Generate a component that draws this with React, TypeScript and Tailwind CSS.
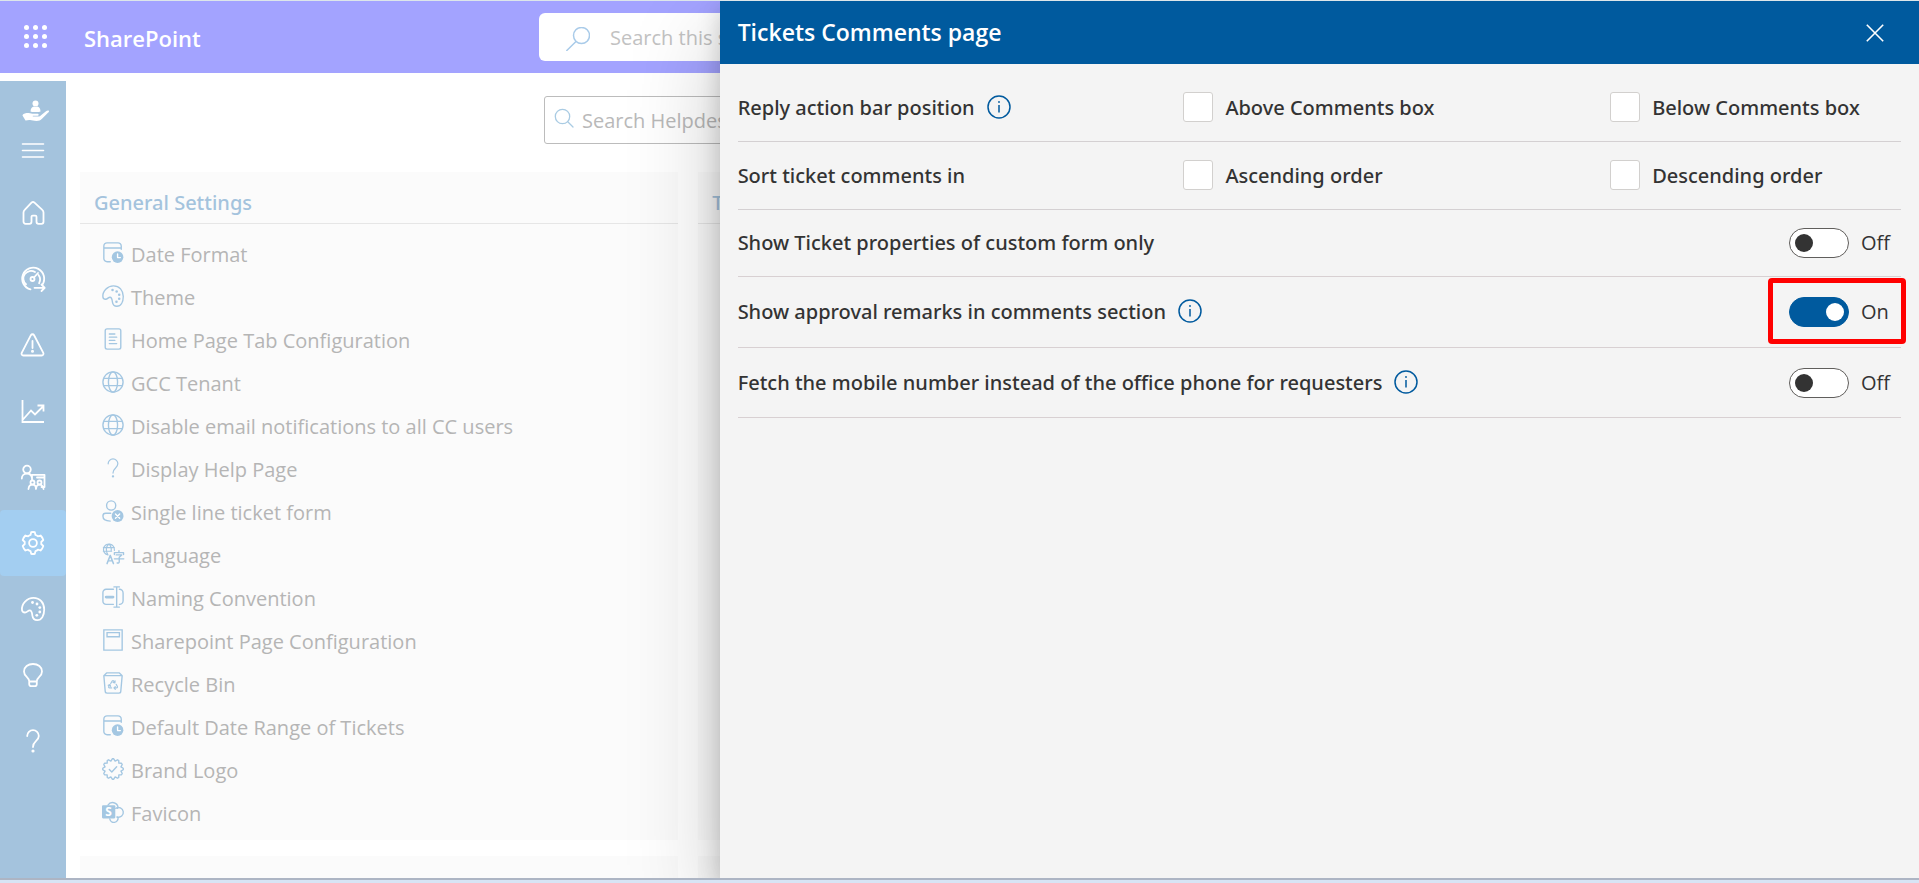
import React, { useState } from "react";

type IconProps = { className?: string };

function Svg({
  className = "size-6",
  sw = 1.5,
  children,
}: IconProps & { sw?: number; children: React.ReactNode }) {
  return (
    <svg
      viewBox="0 0 24 24"
      className={className}
      fill="none"
      stroke="currentColor"
      strokeWidth={sw}
      strokeLinecap="round"
      strokeLinejoin="round"
      overflow="visible"
      aria-hidden="true"
    >
      {children}
    </svg>
  );
}

const HandIcon = () => (
  <svg viewBox="0 0 28 24" className="h-6 w-7" fill="currentColor" aria-hidden="true">
    <circle cx="14.500" cy="4.500" r="3" />
    <path d="M9.500 12.500c0-3 1.500-4.500 3.500-5 1 .6 2.200.6 3.200 0 2 .5 3.300 2 3.300 5-1 .8-9 .8-10 0z" />
    <path d="M1.500 16.500c0-1 1.500-2.200 4-2.500 2.500-.2 4 .7 6 .7h5c1.600 0 1.500 2-.2 2.100h-4.500v.8h5.700c1 0 1.600-.6 2.200-1.200l5-4c1.200-1 3.800-1.400 3.300.2-.3 1-1.500 1.700-2.500 2.700l-4.500 4.400c-1.500 1.300-3 2.300-5.500 2.300-3 0-4.500-.5-6.500-.9-1.500-.3-3 .4-4.500.3z" />
  </svg>
);

const MenuIcon = () => (
  <Svg sw={1.6}>
    <path d="M1.500 5h21M1.500 11.500h21M1.500 18h21" />
  </Svg>
);

const HomeIcon = () => (
  <Svg sw={1.8}>
    <path d="M10.500 1.700a2.200 2.200 0 0 1 3 0l7.800 7.200c.8.700 1.200 1.700 1.200 2.700v9.200a2 2 0 0 1-2 2h-3a2 2 0 0 1-2-2v-5a1.200 1.200 0 0 0-1.200-1.200h-2.600a1.200 1.200 0 0 0-1.200 1.200v5a2 2 0 0 1-2 2h-4a2 2 0 0 1-2-2v-9.200c0-1 .4-2 1.200-2.700z" />
  </Svg>
);

const GaugeIcon = () => (
  <Svg sw={1.8}>
    <path d="M9.500 22.300A11 11 0 1 1 21.300 17.800" />
    <path d="M5 17.300a7.600 7.600 0 0 1 9-12.200M17.500 8a7.600 7.600 0 0 1 .6 8.200" />
    <circle cx="11.500" cy="12" r="2" />
    <path d="M13 10.500l4-4.500M13.500 20.800H23.500M20.500 17.500l3.200 3.300-3.200 3.200" />
  </Svg>
);

const WarningIcon = () => (
  <Svg sw={1.8}>
    <path d="M9.900 2.200c.7-1.300 2.500-1.300 3.200 0l9.200 17.600c.6 1.300-.2 2.700-1.600 2.700H2.300c-1.400 0-2.200-1.400-1.600-2.700z" />
    <path d="M11.500 8v7" />
    <circle cx="11.500" cy="18.200" r=".6" fill="currentColor" />
  </Svg>
);

const ChartIcon = () => (
  <Svg sw={1.8}>
    <path d="M1.500 1v22H23M2 20.500l8-9 4 4L22.500 7M16.500 6.500h6v6" strokeLinecap="butt" strokeLinejoin="miter" />
  </Svg>
);

const TeamIcon = () => (
  <Svg sw={1.8}>
    <circle cx="6" cy="4.500" r="3.800" />
    <path d="M.8 13.500C.8 10.500 3 8.500 6 8.500s4.500 1.700 5 4.500M11 14.500V9.800h12.500V22h-3M16 12.500h7" />
    <circle cx="11.500" cy="17.500" r="2" />
    <circle cx="18.500" cy="17.500" r="2" />
    <path d="M7.500 24c.2-2.500 1.800-4.300 4-4.300s3.500 1.800 3.500 4.300c.2-2.500 1.500-4.300 3.500-4.300s3.800 1.800 4 4.300" />
  </Svg>
);

const GEAR =
  "M13.800 1.200l.7 2.700c.9.300 1.700.8 2.400 1.400l2.700-.8c1.300 1.300 2.200 2.800 2.700 4.500l-2.100 2c.2.700.2 1.300 0 2l2.100 2c-.5 1.700-1.400 3.300-2.700 4.500l-2.700-.8c-.7.600-1.500 1.100-2.400 1.400l-.7 2.700c-1.200.3-2.400.3-3.600 0l-.7-2.700c-.9-.3-1.700-.8-2.400-1.400l-2.700.8A11 11 0 0 1 1.700 15l2.100-2c-.2-.7-.2-1.300 0-2L1.700 9c.5-1.700 1.400-3.200 2.700-4.500l2.700.8c.7-.6 1.500-1.100 2.400-1.400l.7-2.700c1.200-.3 2.400-.3 3.600 0z";

const GearIcon = () => (
  <Svg sw={1.8}>
    <path d={GEAR} />
    <circle cx="12" cy="12" r="3.900" />
  </Svg>
);

const PaletteIcon = ({ className, sw = 1.8 }: IconProps & { sw?: number }) => (
  <Svg className={className} sw={sw}>
    <path d="M1 13.200C.2 6.500 6.200.9 12.500.9c6.400 0 10.700 5 10.700 11.600 0 6-2.500 10.700-7 10.700-3 0-4.400-1.700-4.800-4.500-.3-2.500-.5-5.400-2.700-5.400-1.800 0-2.600 2.200-4.700 2.200C2.300 15.500 1.200 14.700 1 13.200z" />
    <g fill="currentColor" stroke="none">
      <circle cx="11.500" cy="5.500" r="1.400" />
      <circle cx="16" cy="7" r="1.400" />
      <circle cx="18.800" cy="10.600" r="1.400" />
      <circle cx="18.800" cy="15" r="1.400" />
      <circle cx="15.800" cy="18.300" r="1.400" />
    </g>
  </Svg>
);

const BulbIcon = () => (
  <Svg sw={1.8}>
    <path d="M8.200 18c-.5-4-5.200-4.500-5.200-9.500C3 4 7 1 12 1s9 3 9 7.500c0 5-4.700 5.500-5.200 9.500v3c0 1.200-.8 2.200-2 2.200h-3.600c-1.200 0-2-1-2-2.200zM8.500 18.500h7" />
  </Svg>
);

const QuestionIcon = ({ className, sw = 1.8 }: IconProps & { sw?: number }) => (
  <Svg className={className} sw={sw}>
    <path d="M6.200 7A5.800 5.800 0 1 1 17.800 7c0 5-5.800 5-5.800 11" />
    <circle cx="12" cy="22" r=".7" fill="currentColor" />
  </Svg>
);

const DateClockIcon = () => (
  <Svg className="size-[22px]" sw={1.5}>
    <path d="M9 21.500H5.500A3.500 3.500 0 0 1 2 18V4.500A3.500 3.500 0 0 1 5.500 1h12A3.500 3.500 0 0 1 21 4.500V8M2 6.500h19" />
    <circle cx="17" cy="16.500" r="6.300" fill="currentColor" stroke="none" />
    <path d="M17 13v4h3" stroke="#fff" />
  </Svg>
);

const PageIcon = () => (
  <Svg className="size-[22px]" sw={1.5}>
    <rect x="3.500" y="1" width="17" height="22" rx="2" />
    <path d="M8 6.500h6M8 10h8M8 13.500h6M8 17h8" />
  </Svg>
);

const GlobeIcon = () => (
  <Svg className="size-[22px]" sw={1.5}>
    <circle cx="12" cy="12" r="11" />
    <ellipse cx="12" cy="12" rx="5" ry="11" />
    <path d="M2 8h20M2 16h20" />
  </Svg>
);

const PersonXIcon = () => (
  <Svg className="size-[22px]" sw={1.5}>
    <circle cx="10" cy="6" r="5" />
    <path d="M9.500 14.500H4a3 3 0 0 0-3 3c0 3.500 3 5.500 8 5.500" />
    <circle cx="17" cy="17.500" r="6.500" fill="currentColor" stroke="none" />
    <path d="M14.700 15.200l4.600 4.600M19.300 15.200l-4.600 4.600" stroke="#fff" />
  </Svg>
);

const LanguageIcon = () => (
  <Svg className="size-[22px]" sw={1.3}>
    <path d="M6.500 13A6 6 0 1 1 13.500 8M1.500 5h12M1.500 9h9M6.500 13C4 9.500 4 3.500 7.500 1 10 3.500 10.500 6 10 9" />
    <path d="M5.500 22.500l3.500-9 3.500 9M6.800 19.500h4.400" strokeWidth="1.600" />
    <path d="M18.500 8.500v1.800M13.500 12.500v-2h10v2M15.500 13h6l-2.700 2.500v5q0 1.700-2.300 1.300M13.500 17.300h10.300" strokeWidth="1.500" />
  </Svg>
);

const RenameIcon = () => (
  <Svg className="size-[22px]" sw={1.5}>
    <path d="M12.500 3.500H4.500A3.500 3.500 0 0 0 1 7v9.500A3.500 3.500 0 0 0 4.500 20h8M19 3.500a4 4 0 0 1 4 4v8.500a4 4 0 0 1-4 4M16 1v22M13 1h6M13 23h6" />
    <path d="M4.500 12H12" strokeWidth="3" />
  </Svg>
);

const SitePageIcon = () => (
  <Svg className="size-[22px]" sw={1.5}>
    <path d="M2 1h20v22H2zM5.500 4h13.500v4.500H5.500z" strokeLinejoin="miter" />
  </Svg>
);

const RecycleBinIcon = () => (
  <Svg className="size-[22px]" sw={1.5}>
    <path d="M2 4L5 1h14l3 3-1.500 17a2 2 0 0 1-2 2h-13a2 2 0 0 1-2-2zM2 4h20" />
    <path
      d="M9.500 12.500l1.600-2.600q.9-1.200 1.800 0l1 1.600M14.300 9.600l-.2 2.200-2-.4M15.500 13.500l1.300 2.300q.5 1.500-1 1.600h-2.600M14.500 15.900l-1.500 1.500 1.500 1.500M10.500 17.400H8.300q-1.500-.1-.9-1.600l1-1.700M6.800 14.500l1.900-.8.700 2"
      strokeWidth="1.300"
    />
  </Svg>
);

const SCALLOP = (() => {
  const n = 12;
  const at = (r: number, a: number) =>
    `${(12 + r * Math.sin(a)).toFixed(2)} ${(12 - r * Math.cos(a)).toFixed(2)}`;
  let d = "";
  for (let i = 0; i < n; i++) {
    const a = (i * 2 * Math.PI) / n;
    const h = Math.PI / n;
    d += `${i ? "L" : "M"}${at(11.2, a - 0.07)}L${at(11.2, a + 0.07)}L${at(9, a + h)}`;
  }
  return d + "z";
})();

const BadgeIcon = () => (
  <Svg className="size-[22px]" sw={1.5}>
    <path d={SCALLOP} />
    <path d="M8 12.500l2.700 2.700L16 9.500" />
  </Svg>
);

const FaviconIcon = () => (
  <Svg className="size-[22px]" sw={1.5}>
    <path d="M6.500 4.500a6 6 0 0 1 11 2.500M15 8a5.300 5.300 0 1 1 1.500 9.500M17.500 18a4.500 4.500 0 0 1-9 1.500" />
    <path d="M17.500 7l-.5 1M16.500 17.500l1 .5" />
    <rect x="0" y="4.500" width="14.500" height="14.500" rx="1.200" fill="currentColor" stroke="none" />
    <text x="7.200" y="16.500" textAnchor="middle" fontSize="13" fontWeight="700" fontFamily="Open Sans, sans-serif" fill="#fff" stroke="none">
      S
    </text>
  </Svg>
);

const navItems = [
  { label: "Home", Icon: HomeIcon },
  { label: "Dashboard", Icon: GaugeIcon },
  { label: "Alerts", Icon: WarningIcon },
  { label: "Reports", Icon: ChartIcon },
  { label: "Teams", Icon: TeamIcon },
  { label: "Settings", Icon: GearIcon, active: true },
  { label: "Appearance", Icon: PaletteIcon },
  { label: "Tips", Icon: BulbIcon },
  { label: "Help", Icon: QuestionIcon },
];

const settings: { label: string; icon: React.ReactNode }[] = [
  { label: "Date Format", icon: <DateClockIcon /> },
  { label: "Theme", icon: <PaletteIcon className="size-[22px]" sw={1.5} /> },
  { label: "Home Page Tab Configuration", icon: <PageIcon /> },
  { label: "GCC Tenant", icon: <GlobeIcon /> },
  { label: "Disable email notifications to all CC users", icon: <GlobeIcon /> },
  { label: "Display Help Page", icon: <QuestionIcon className="h-5 w-[22px]" sw={1.5} /> },
  { label: "Single line ticket form", icon: <PersonXIcon /> },
  { label: "Language", icon: <LanguageIcon /> },
  { label: "Naming Convention", icon: <RenameIcon /> },
  { label: "Sharepoint Page Configuration", icon: <SitePageIcon /> },
  { label: "Recycle Bin", icon: <RecycleBinIcon /> },
  { label: "Default Date Range of Tickets", icon: <DateClockIcon /> },
  { label: "Brand Logo", icon: <BadgeIcon /> },
  { label: "Favicon", icon: <FaviconIcon /> },
];

function TopBar() {
  return (
    <header className="flex h-[72px] shrink-0 items-center bg-[#a3a3ff] text-white">
      <button type="button" aria-label="App launcher" className="ml-6 flex size-6 items-center justify-center">
        <svg viewBox="0 0 24 24" className="size-6" fill="currentColor" aria-hidden="true">
          {[2.5, 11.5, 20.5].map((y) => [2.5, 11.5, 20.5].map((x) => <circle key={`${x}-${y}`} cx={x} cy={y} r="2.500" />))}
        </svg>
      </button>
      <span className="ml-9 pt-0.5 text-[22px] leading-8 font-semibold">SharePoint</span>
      <div className="absolute left-[539px] flex h-12 w-[780px] items-center rounded-md bg-white text-[#a9cbe9]">
        <svg viewBox="0 0 24 24" className="ml-[27px] mt-1 size-6 shrink-0" fill="none" stroke="currentColor" strokeWidth="1.500" strokeLinecap="round" aria-hidden="true">
          <circle cx="15.500" cy="8.500" r="8" />
          <path d="M10 14.500L.8 23.500" />
        </svg>
        <input
          type="search"
          aria-label="Search this site"
          placeholder="Search this site"
          className="ml-5 grow bg-transparent pt-0.5 text-[20px] outline-none placeholder:text-[#c2c2c2]"
        />
      </div>
    </header>
  );
}

function SideNav() {
  return (
    <nav aria-label="Main" className="mt-2 flex w-[66px] shrink-0 flex-col items-center bg-[#a4c3dd] text-white">
      <a href="#" aria-label="Helpdesk" className="mt-[18px] flex h-6 items-center pl-1">
        <HandIcon />
      </a>
      <button type="button" aria-label="Toggle menu" className="mt-4 mb-[17px] h-6">
        <MenuIcon />
      </button>
      {navItems.map(({ label, Icon, active }) => (
        <a
          key={label}
          href="#"
          aria-label={label}
          className={`flex h-[66px] w-full items-center justify-center rounded ${active ? "bg-[#a3cef1]" : ""}`}
        >
          <Icon />
        </a>
      ))}
    </nav>
  );
}

function SettingsPage() {
  return (
    <main className="flex min-w-0 grow flex-col pl-[14px]">
      <div className="ml-[464px] mt-[23px] flex h-12 w-[400px] shrink-0 items-center rounded-[3px] border border-[#bcbcbc] text-[#a9cbe3]">
        <svg viewBox="0 0 20 20" className="mb-1 ml-[9px] size-5 shrink-0" fill="none" stroke="currentColor" strokeWidth="1.300" strokeLinecap="round" aria-hidden="true">
          <circle cx="8.500" cy="8.500" r="7.200" />
          <path d="M14 14l5 5" />
        </svg>
        <input
          type="search"
          aria-label="Search Helpdesk settings"
          placeholder="Search Helpdesk settings"
          className="ml-2 min-w-0 grow bg-transparent pt-0.5 text-[20px] outline-none placeholder:text-[#b9b9b9]"
        />
      </div>
      <div className="mt-7 grid grid-cols-3 gap-x-5 gap-y-4 pr-1">
        <section className="min-h-[668px] bg-[#fbfbfb]">
          <h2 className="flex h-[52px] items-center border-b border-[#e6e6e6] px-[14px] pt-[10px] font-['Noto_Sans','Open_Sans',sans-serif] text-[20px] font-medium text-[#a4c3dd]">
            General Settings
          </h2>
          <ul className="pt-[9px]">
            {settings.map(({ label, icon }) => (
              <li key={label}>
                <a href="#" className="flex h-[43px] items-center gap-[7px] pl-[22px] text-[20px] text-[#b5b5b5]">
                  <span className="mb-1 text-[#a4c7e2]">{icon}</span>
                  <span>{label}</span>
                </a>
              </li>
            ))}
          </ul>
        </section>
        <section className="bg-[#fbfbfb]">
          <h2 className="flex h-[52px] items-center border-b border-[#e6e6e6] px-[14px] pt-[10px] font-['Noto_Sans','Open_Sans',sans-serif] text-[20px] font-medium text-[#a4c3dd]">
            Ticket Settings
          </h2>
        </section>
        <section className="bg-[#fbfbfb]" />
        <section className="h-12 bg-[#fbfbfb]" />
        <section className="bg-[#fbfbfb]" />
        <section className="bg-[#fbfbfb]" />
      </div>
    </main>
  );
}

function Info({ about }: { about: string }) {
  return (
    <button type="button" aria-label={`About: ${about}`} className="mb-0.5 ml-3 text-[#005a9e]">
      <svg viewBox="0 0 24 24" className="size-6" fill="none" stroke="currentColor" strokeWidth="1.500" aria-hidden="true">
        <circle cx="12" cy="12" r="11" />
        <path d="M12 10v7.500" />
        <circle cx="12" cy="7" r=".9" fill="currentColor" stroke="none" />
      </svg>
    </button>
  );
}

function ChoiceRow({ label, info, options }: { label: string; info?: boolean; options: string[] }) {
  return (
    <div
      role="group"
      aria-label={label}
      className="grid h-[68px] grid-cols-[446fr_427fr_291fr] items-center border-b border-[#d4d0d2]"
    >
      <div className="flex items-center">
        <span>{label}</span>
        {info && <Info about={label} />}
      </div>
      {options.map((option) => (
        <label key={option} className="flex items-center gap-3">
          <input
            type="checkbox"
            className="mb-0.5 size-[30px] shrink-0 appearance-none rounded-[3px] border border-[#d2d0ce] bg-white checked:bg-[#005a9e]"
          />
          {option}
        </label>
      ))}
    </div>
  );
}

function ToggleRow({
  id,
  label,
  info,
  initial = false,
  highlighted = false,
  height,
}: {
  id: string;
  label: string;
  info?: boolean;
  initial?: boolean;
  highlighted?: boolean;
  height: string;
}) {
  const [on, setOn] = useState(initial);
  return (
    <div className={`flex items-center justify-between border-b border-[#d8d0d2] ${height}`}>
      <div className="flex items-center">
        <label htmlFor={id}>{label}</label>
        {info && <Info about={label} />}
      </div>
      <div className="relative flex w-28 items-center gap-3 font-['Open_Sans','Noto_Sans',sans-serif] font-normal">
        <input
          id={id}
          type="checkbox"
          role="switch"
          checked={on}
          onChange={() => setOn(!on)}
          className="flex h-[30px] w-[60px] shrink-0 appearance-none items-center rounded-full border border-[#605e5c] bg-white px-[5px] before:size-[18px] before:rounded-full before:bg-[#333] checked:justify-end checked:border-[#005a9e] checked:bg-[#005a9e] checked:px-1 checked:before:bg-white"
        />
        <span>{on ? "On" : "Off"}</span>
        {highlighted && (
          <span className="pointer-events-none absolute -top-[19px] -right-[5px] -bottom-[17px] -left-[21px] rounded border-[5px] border-[#ff0000]" />
        )}
      </div>
    </div>
  );
}

function CommentsPanel() {
  return (
    <aside
      aria-label="Tickets Comments page"
      className="absolute inset-y-0 right-0 flex w-[62.5%] flex-col bg-[#f4f4f4] font-['Noto_Sans','Open_Sans',sans-serif] text-[#333] shadow-[0_38px_86px_rgba(0,0,0,0.22),0_7px_22px_rgba(0,0,0,0.18)]"
    >
      <div className="flex h-[63px] shrink-0 items-center justify-between bg-[#005a9e] pr-8 pl-[18px] text-white">
        <h1 className="pb-0.5 font-['Open_Sans','Noto_Sans',sans-serif] text-[23px] leading-8 font-semibold">
          Tickets Comments page
        </h1>
        <button type="button" aria-label="Close" className="flex size-6 items-center justify-center">
          <svg viewBox="0 0 18 18" className="size-[18px]" fill="none" stroke="currentColor" strokeWidth="1.600" aria-hidden="true">
            <path d="M.8.8l16.400 16.400M17.200.8L.8 17.200" />
          </svg>
        </button>
      </div>
      <div className="px-[18px] pt-[10px] text-[20px] leading-7 font-medium">
        <ChoiceRow label="Reply action bar position" info options={["Above Comments box", "Below Comments box"]} />
        <ChoiceRow label="Sort ticket comments in" options={["Ascending order", "Descending order"]} />
        <ToggleRow id="custom-form" label="Show Ticket properties of custom form only" height="h-[67px]" />
        <ToggleRow id="approval" label="Show approval remarks in comments section" info initial highlighted height="h-[71px]" />
        <ToggleRow id="mobile" label="Fetch the mobile number instead of the office phone for requesters" info height="h-[70px]" />
      </div>
    </aside>
  );
}

export default function App() {
  return (
    <div className="flex h-screen flex-col overflow-hidden border-t border-[#dde6ea] bg-white font-['Open_Sans','Noto_Sans',sans-serif]">
      <div className="relative flex min-h-0 grow flex-col overflow-hidden">
        <TopBar />
        <div className="flex min-h-0 grow">
          <SideNav />
          <SettingsPage />
        </div>
        <CommentsPanel />
      </div>
      <div className="h-[5px] shrink-0 border-t-2 border-[#adb5c4] bg-[#d8e4f5]" />
    </div>
  );
}
